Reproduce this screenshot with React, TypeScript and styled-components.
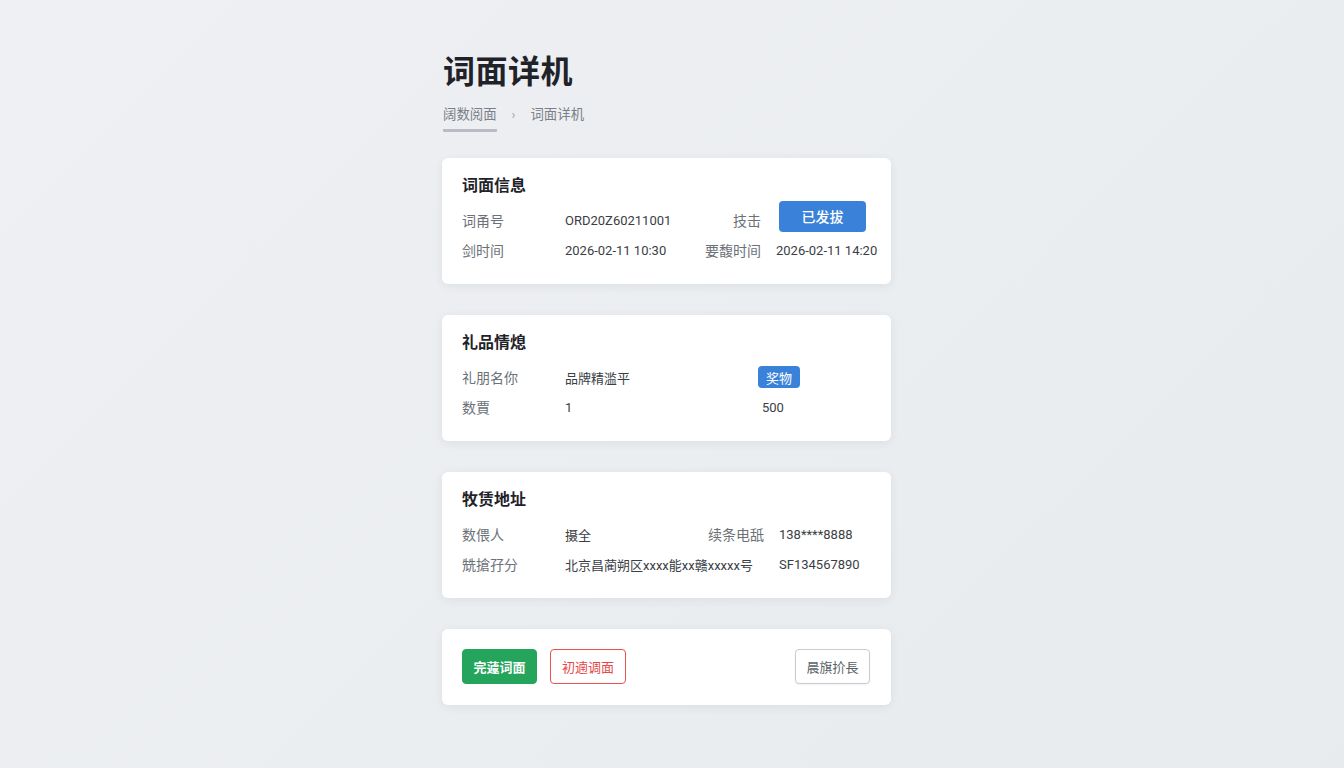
import React, { FC } from "react";
import styled, { createGlobalStyle, css } from "styled-components";

const GlobalStyle = createGlobalStyle`
  html, body {
    margin: 0;
    padding: 0;
    background: #eaecef;
  }
  body {
    font-family: Roboto, "Noto Sans CJK SC", sans-serif;
    -webkit-font-smoothing: antialiased;
  }
`;

const Page = styled.div`
  min-height: 768px;
  box-sizing: border-box;
  display: flex;
  justify-content: center;
  padding: 52px 11px 0 0;
  background: linear-gradient(135deg, #eef0f3 0%, #e8ebee 100%);
`;

const Column = styled.div`
  width: 449px;
  display: flex;
  flex-direction: column;
`;

const Title = styled.h1`
  margin: 0 0 0 1px;
  font-size: 32px;
  line-height: 40px;
  font-weight: 700;
  color: #1f2329;
  letter-spacing: 0.5px;
`;

const Breadcrumb = styled.nav`
  display: flex;
  align-items: flex-start;
  gap: 15px;
  margin: 14px 0 26px 1px;
  font-size: 13.4px;
  line-height: 18px;
  color: #7b8088;
`;

const Crumb = styled.span<{ active?: boolean }>`
  padding-bottom: 5px;
  ${({ active }) =>
    active &&
    css`
      border-bottom: 3px solid #b9bdc3;
      border-radius: 1px;
    `}
`;

const Sep = styled.span`
  color: #9ca1a8;
  font-size: 13px;
`;

const Card = styled.section<{ compact?: boolean }>`
  background: #fff;
  border-radius: 6px;
  box-shadow: 0 2px 10px rgba(30, 40, 60, 0.07);
  padding: ${({ compact }) => (compact ? "20px 21px 21px 20px" : "17px 20px 19px")};
  margin-bottom: 31px;
`;

const CardTitle = styled.h2`
  margin: 0 0 8px;
  font-size: 16px;
  line-height: 22px;
  font-weight: 700;
  color: #1f2329;
`;

const Grid = styled.div<{ cols: string }>`
  display: grid;
  grid-template-columns: ${({ cols }) => cols};
  grid-auto-rows: 30px;
  column-gap: 15px;
  align-items: center;
`;

const Label = styled.span<{ right?: boolean }>`
  font-size: 14px;
  color: #6c7178;
  white-space: nowrap;
  text-align: ${({ right }) => (right ? "right" : "left")};
`;

const Value = styled.span<{ wide?: boolean; shift?: number }>`
  font-size: 13px;
  color: #3a3e45;
  white-space: nowrap;
  margin-left: ${({ shift }) => shift || 0}px;
  ${({ wide }) => wide && "grid-column: span 2;"}
`;

const StatusButton = styled.span`
  display: inline-flex;
  align-items: center;
  justify-content: center;
  width: 87px;
  height: 31px;
  margin: -8px 0 0 3px;
  border-radius: 4px;
  background: #3a82d9;
  color: #fff;
  font-size: 14px;
  font-weight: 500;
`;

const Badge = styled.span`
  justify-self: start;
  display: inline-flex;
  align-items: center;
  padding: 0 8px;
  height: 22px;
  border-radius: 4px;
  background: #3a82d9;
  color: #fff;
  font-size: 13px;
`;

const Actions = styled.div`
  display: flex;
  align-items: center;
  gap: 13px;
`;

const Spacer = styled.div`
  flex: 1;
`;

type Tone = "primary" | "danger" | "ghost";

const tones: Record<Tone, ReturnType<typeof css>> = {
  primary: css`
    background: #25a55b;
    border-color: #25a55b;
    color: #fff;
    font-weight: 700;
  `,
  danger: css`
    background: #fff;
    border-color: #ea5050;
    color: #e44848;
  `,
  ghost: css`
    background: #fff;
    border-color: #c8ccd2;
    color: #5a5f66;
    box-shadow: 0 1px 2px rgba(0, 0, 0, 0.05);
  `,
};

const Button = styled.button<{ tone: Tone }>`
  height: 35px;
  width: ${({ tone }) => (tone === "danger" ? "76px" : "75px")};
  border: 1px solid;
  border-radius: 4px;
  font-family: inherit;
  font-size: 13px;
  padding: 0;
  cursor: pointer;
  ${({ tone }) => tones[tone]}
`;

const App: FC = () => (
  <>
    <GlobalStyle />
    <Page>
      <Column>
        <Title>词面详机</Title>
        <Breadcrumb>
          <Crumb active>阔数阅面</Crumb>
          <Sep>›</Sep>
          <Crumb>词面详机</Crumb>
        </Breadcrumb>

        <Card>
          <CardTitle>词面信息</CardTitle>
          <Grid cols="88px 1fr auto 95px">
            <Label>词甬号</Label>
            <Value>ORD20Z60211001</Value>
            <Label right>技击</Label>
            <StatusButton>已发拔</StatusButton>
            <Label>剑时间</Label>
            <Value>2026-02-11 10:30</Value>
            <Label right>要馥时间</Label>
            <Value>2026-02-11 14:20</Value>
          </Grid>
        </Card>

        <Card>
          <CardTitle>礼品情熄</CardTitle>
          <Grid cols="88px 1fr 113px">
            <Label>礼朋名你</Label>
            <Value>品牌精滥平</Value>
            <Badge>奖物</Badge>
            <Label>数賈</Label>
            <Value>1</Value>
            <Value shift={4}>500</Value>
          </Grid>
        </Card>

        <Card>
          <CardTitle>牧赁地址</CardTitle>
          <Grid cols="88px 1fr auto 92px">
            <Label>数偎人</Label>
            <Value>摄全</Value>
            <Label right>续条电舐</Label>
            <Value>138****8888</Value>
            <Label>兟搶孖分</Label>
            <Value wide>北京昌蔺朔区xxxx能xx赣xxxxx号</Value>
            <Value>SF134567890</Value>
          </Grid>
        </Card>

        <Card compact>
          <Actions>
            <Button tone="primary">完蘧词面</Button>
            <Button tone="danger">初遖调面</Button>
            <Spacer />
            <Button tone="ghost">晨旗扴長</Button>
          </Actions>
        </Card>
      </Column>
    </Page>
  </>
);

export default App;
